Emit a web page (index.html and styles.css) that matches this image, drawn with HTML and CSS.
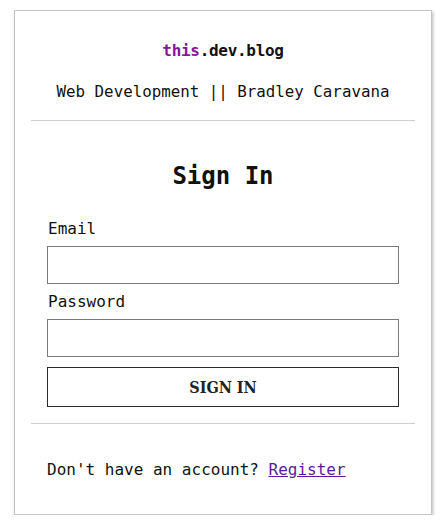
FILE: index.html
```html
<!DOCTYPE html>
<html lang="en">
<head>
<meta charset="utf-8">
<title>Sign In - this.dev.blog</title>
<link rel="stylesheet" href="styles.css">
</head>
<body>
<div class="card">
  <header class="header">
    <div class="brand"><span class="brand-this">this</span>.dev.blog</div>
    <div class="tagline">Web Development || Bradley Caravana</div>
  </header>
  <hr class="rule rule-top">
  <main class="form-area">
    <h1 class="title">Sign In</h1>
    <form class="form">
      <label class="label" for="email">Email</label>
      <input class="input" id="email" type="email">
      <label class="label label-pw" for="password">Password</label>
      <input class="input" id="password" type="password">
      <button class="btn" type="button">SIGN IN</button>
    </form>
  </main>
  <hr class="rule rule-bottom">
  <footer class="footer">Don't have an account? <a class="link" href="#">Register</a></footer>
</div>
</body>
</html>
```
FILE: styles.css
```css
html, body {
  margin: 0;
  padding: 0;
  background: #ffffff;
}
body {
  padding: 10px 10px 0 14px;
  font-family: "DejaVu Sans Mono", "Liberation Mono", monospace;
  font-size: 16px;
  color: #111;
}
.card {
  width: 418px;
  box-sizing: border-box;
  border: 1px solid #c4c4c4;
  box-shadow: 1px 2px 3px rgba(0,0,0,0.28);
  padding: 30px 16px 34px;
  background: #fff;
}
.header {
  display: flex;
  flex-direction: column;
  align-items: center;
}
.brand {
  font-weight: bold;
  font-size: 16px;
  line-height: 20px;
  color: #111;
  letter-spacing: -0.3px;
}
.brand-this {
  color: #8d1399;
}
.tagline {
  margin-top: 21px;
  line-height: 20px;
  font-size: 15.8px;
}
.rule {
  border: none;
  height: 1px;
  background: #cfcfcf;
  margin: 0;
}
.rule-top {
  margin-top: 18px;
}
.form-area {
  padding: 0 16px;
}
.title {
  margin: 40px 0 0;
  text-align: center;
  font-size: 24px;
  line-height: 30px;
  font-weight: bold;
}
.form {
  display: flex;
  flex-direction: column;
  margin-top: 27px;
}
.label {
  line-height: 20px;
  padding: 1px 0 0 1px;
}
.label-pw {
  margin-top: 7px;
}
.input {
  margin-top: 7px;
  height: 38px;
  box-sizing: border-box;
  border: 1px solid #7a7a7a;
  border-radius: 0;
  padding: 0 8px;
  font: inherit;
}
.btn {
  margin-top: 10px;
  height: 40px;
  box-sizing: border-box;
  border: 1px solid #2b2b2b;
  border-radius: 0;
  background: #fff;
  font-family: "DejaVu Serif", "Liberation Serif", serif;
  font-stretch: condensed;
  font-weight: bold;
  font-size: 16px;
  color: #222;
}
.rule-bottom {
  margin-top: 16px;
}
.footer {
  margin-top: 36px;
  padding-left: 16px;
  line-height: 20px;
}
.link {
  color: #5b1a9b;
  text-decoration: underline;
}
```
